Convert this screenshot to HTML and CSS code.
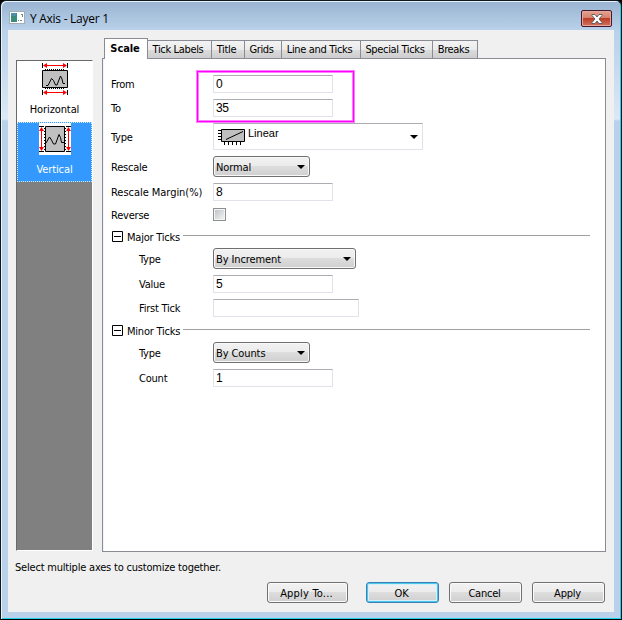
FILE: index.html
```html
<!DOCTYPE html>
<html lang="en">
<head>
<meta charset="utf-8">
<title>Y Axis - Layer 1</title>
<link rel="stylesheet" href="styles.css">
</head>
<body>
<div class="window">
  <header class="titlebar">
    <svg class="app-icon" width="16" height="13" viewBox="0 0 16 13"><rect x=".5" y=".5" width="15" height="12" fill="#fff" stroke="#a3adb5"/><rect x="2" y="2" width="6" height="9" fill="#3c8b78"/><path d="M2 2h5v3H2z" fill="#4d8fa8"/><path d="M9 9h1v1H9zM12 3h2v1h-2zM13 4h1v2h-1zM11 9h2v1h-2z" fill="#63948b"/></svg>
    <h1>Y Axis - Layer 1</h1>
    <button class="close" aria-label="Close"><svg width="12" height="10" viewBox="0 0 12 10"><path d="M1 .5h3L6 3 8 .5h3v1L8 5l3 3.500v1H8L6 7 4 9.500H1v-1L4 5 1 1.500z" fill="#fff" stroke="#55595f" stroke-width=".9"/></svg></button>
  </header>
  <main class="client">
    <div class="workspace">
      <nav class="axes">
        <div class="axis">
          <svg width="32" height="33" viewBox="0 0 32 33"><path d="M3.500 8.500h25v17h-25z" fill="#c0c0c0" stroke="#000"/><path d="M6 7.500h20M6 26.500h20" stroke="#000" stroke-dasharray="1 1"/><path d="M3.500 1v5M28.500 1v5M3.500 28v5M28.500 28v5" stroke="#000"/><path d="M5 3.500h22M5 30.500h22" stroke="red"/><path d="M4 3.500l4-2.500v5zM28 3.500l-4-2.500v5zM4 30.500l4-2.500v5zM28 30.500l-4-2.500v5z" fill="red"/><path d="M7 23.500h2l3.500-7 2 2 2 4.500h1.500l3.500-9 1.500 3 1 4.500h2" fill="none" stroke="#000"/></svg>
          <span>Horizontal</span>
        </div>
        <div class="axis selected">
          <svg width="32" height="32" viewBox="0 0 32 32"><path d="M0 0h32v32H0z" fill="#fff"/><path d="M6.500 3.500h19v25h-19z" fill="#c0c0c0" stroke="#000"/><path d="M5.500 5v22M26.500 5v22" stroke="#000" stroke-dasharray="1 2"/><path d="M0 3.500h5M0 28.500h5M27 3.500h5M27 28.500h5" stroke="#000"/><path d="M2.500 5v22M29.500 5v22" stroke="red"/><path d="M2.500 4L0 8h5zM2.500 28L0 24h5zM29.500 4L27 8h5zM29.500 28L27 24h5z" fill="red"/><path d="M7 20l3.500-6 2 3 2 4h2l3.500-9.500 1.500 3 1 5h2.500" fill="none" stroke="#000"/></svg>
          <span>Vertical</span>
        </div>
      </nav>
      <section class="notebook">
        <div class="tabs">
          <div class="tab active">Scale</div><div class="tab t2">Tick Labels</div><div class="tab t3">Title</div><div class="tab t4">Grids</div><div class="tab t5">Line and Ticks</div><div class="tab t6">Special Ticks</div><div class="tab t7">Breaks</div>
        </div>
        <div class="panel">
          <div class="range-mark"></div>
          <div class="row r24"><label>From</label><div class="input">0</div></div>
          <div class="row r24"><label>To</label><div class="input">35</div></div>
          <div class="row r33"><label>Type</label><div class="input picker">
            <svg width="27" height="17" viewBox="0 0 27 17"><path d="M3.500 1.500h23v12h-23z" fill="#c0c0c0" stroke="#000"/><path d="M0 2.500h3M0 5.500h3M0 8.500h3M0 11.500h3M6.500 14v3M10.500 14v3M14.500 14v3M18.500 14v3M22.500 14v3" stroke="#000"/><path d="M8 11.500L25 3.500" stroke="#000"/></svg>
            <span>Linear</span><i class="arrow"></i></div></div>
          <div class="row r27"><label>Rescale</label><div class="select">Normal<i class="arrow"></i></div></div>
          <div class="row r24"><label class="margin-label">Rescale Margin(%)</label><div class="input">8</div></div>
          <div class="row r24"><label class="check-label">Reverse</label><div class="checkbox"></div></div>
          <div class="group"><svg width="11" height="11" viewBox="0 0 11 11"><path d="M.5.5h10v10H.5zM2 5.500h7" fill="none" stroke="#000"/></svg><span>Major Ticks</span><hr></div>
          <div class="row r27 sub"><label>Type</label><div class="select wide">By Increment<i class="arrow"></i></div></div>
          <div class="row r24 sub"><label>Value</label><div class="input">5</div></div>
          <div class="row r24 sub"><label>First Tick</label><div class="input long"></div></div>
          <div class="group second"><svg width="11" height="11" viewBox="0 0 11 11"><path d="M.5.5h10v10H.5zM2 5.500h7" fill="none" stroke="#000"/></svg><span>Minor Ticks</span><hr></div>
          <div class="row r27 sub"><label>Type</label><div class="select">By Counts<i class="arrow"></i></div></div>
          <div class="row r24 sub"><label>Count</label><div class="input">1</div></div>
        </div>
      </section>
    </div>
    <p class="hint">Select multiple axes to customize together.</p>
    <footer class="actions"><button class="btn apply-to">Apply To...</button><button class="btn ok">OK</button><button class="btn">Cancel</button><button class="btn">Apply</button></footer>
  </main>
</div>
</body>
</html>
```
FILE: styles.css
```css
* { box-sizing: border-box; }
body { margin: 0; background: #000; color: #000; font: 11px/14px "DejaVu Sans Condensed", "DejaVu Sans", sans-serif; letter-spacing: -0.22px; }
svg { display: block; flex: none; }
button { font: inherit; letter-spacing: inherit; color: inherit; padding: 0; }
.window { width: 622px; height: 620px; border: 1px solid #101820; border-bottom-color: #000; border-radius: 6px 6px 0 0; box-shadow: inset 1px 1px #e9f3fc, inset -1px -1px #20d0ed; background: linear-gradient(#99b4d1, #b9d1ea 29px, #c7daee 70px, #dce9f6 118px, #b9d1ea 120px); padding: 0 7px 7px; }
.titlebar { height: 29px; display: flex; align-items: flex-start; padding: 10px 2px 0 1px; }
.titlebar h1 { margin: 1px 0 0 5px; font: 12px/14px "Open Sans", sans-serif; letter-spacing: -.27px; flex: 1; }
.close { width: 31px; height: 17px; margin-top: -1px; border: 1px solid #43182c; border-radius: 2px; box-shadow: inset 0 0 0 1px #e7a69b; background: linear-gradient(#e6a292, #d8816f 45%, #bd3d25 50%, #d2735f); display: flex; align-items: center; justify-content: center; }
.client { height: 582px; background: #f0f0f0; padding: 8px 8px 0; }
.workspace { display: flex; height: 514px; }
.axes { width: 77px; height: 491px; margin-top: 22px; background: #808080; border: 1px solid #696969; border-right: 1px solid #fff; border-bottom-color: #fff; }
.axis { height: 61px; background: #fff; display: flex; flex-direction: column; align-items: center; padding-top: 1px; }
.axis span { margin-top: 8px; letter-spacing: -.1px; }
.axis.selected { height: 60px; background: #39f; color: #fff; border: 1px dotted #d9ebff; padding-top: 0; }
.notebook { margin-left: 9px; width: 504px; }
.tabs { height: 20px; display: flex; align-items: flex-end; padding-left: 2px; }
.tab { height: 18px; border: 1px solid #898c95; border-left: 0; border-bottom: 0; background: linear-gradient(#f3f3f3, #ebebeb 50%, #dcdcdc 51%, #cecece); text-align: center; padding-right: 3px; line-height: 17px; letter-spacing: -.34px; white-space: nowrap; }
.tab.active { width: 44px; height: 21px; margin-bottom: -1px; padding-right: 2px; background: #fff; border-left: 1px solid #898c95; font-weight: bold; line-height: 20px; letter-spacing: -.1px; position: relative; z-index: 1; }
.t2 { width: 64px; } .t3 { width: 33px; } .t4 { width: 37px; } .t5 { width: 79px; } .t6 { width: 72px; } .t7 { width: 45px; }
.panel { height: 494px; background: #fff; border: 1px solid #898c95; box-shadow: inset 1px 0 #f2f4fb; padding: 16px 14px 0 8px; position: relative; }
.range-mark { position: absolute; left: 93px; top: 11px; width: 159px; height: 53px; border: 1px solid #ff80ff; outline: 1px solid #f0f; outline-offset: -2px; box-shadow: inset 0 0 0 2px #ff80ff; }
.row { display: flex; align-items: flex-start; }
.row label { width: 102px; padding-top: 3px; white-space: nowrap; }
.row .margin-label { letter-spacing: -.04px; }
.row .check-label { padding-top: 2px; }
.row.sub { padding-left: 28px; }
.row.sub label { width: 74px; }
.r24 { height: 24px; } .r27 { height: 27px; } .r33 { height: 33px; }
.row.r33 label { padding-top: 8px; }
.row.r27 label { padding-top: 5px; }
.input { width: 120px; height: 18px; border: 1px solid #e2e3ea; border-top-color: #abadb3; border-radius: 1px; padding: 1px 2px; font: 12px/14px "Liberation Sans", sans-serif; letter-spacing: -.4px; }
.picker { width: 210px; height: 27px; display: flex; padding: 4px 4px 0; }
.picker span { margin: -2px 0 0 3px; flex: 1; font-size: 11px; letter-spacing: 0; }
.input.long { width: 146px; }
.arrow { width: 8px; height: 4px; background: #000; clip-path: polygon(0 0, 100% 0, 50% 100%); }
.picker .arrow { margin-top: 7px; }
.select { width: 97px; height: 21px; border: 1px solid #707070; border-radius: 3px; box-shadow: inset 0 0 0 1px #f8f8f8; background: linear-gradient(#f2f2f2, #ebebeb 49%, #ddd 50%, #cfcfcf); display: flex; align-items: center; justify-content: space-between; padding: 2px 4px 0 2px; letter-spacing: -.1px; }
.select .arrow { margin-top: -1px; }
.select.wide { width: 143px; }
.checkbox { width: 13px; height: 13px; margin-top: 1px; border: 1px solid #8e8f8f; background: linear-gradient(135deg, #bcc1c6, #f6f6f6); box-shadow: inset 0 0 0 1px #f4f4f4; }
.group { display: flex; height: 17px; width: 479px; align-items: flex-start; }
.group svg { margin: 0 0 0 1px; }
.group span { margin: 0 3px 0 4px; }
.group hr { flex: 1; margin: 4px 0 0; border: 0; border-top: 1px solid #a0a0a0; }
.second { margin-top: 2px; }
.hint { margin: 9px 0 0 -1px; letter-spacing: -.2px; }
.actions { display: flex; justify-content: flex-end; gap: 10px; margin-top: 7px; padding-right: 1px; }
.btn { width: 73px; height: 21px; padding: 2px 2px 0 0; border: 1px solid #707070; border-radius: 3px; box-shadow: inset 0 0 0 1px #fbfbfb; background: linear-gradient(#f2f2f2, #ebebeb 49%, #ddd 50%, #cfcfcf); }
.apply-to { width: 81px; margin-right: 8px; letter-spacing: .2px; }
.ok { border-color: #3c7fb1; box-shadow: inset 0 0 0 1px #48c8ef, inset 0 0 0 2px #d5eef8; }
```
